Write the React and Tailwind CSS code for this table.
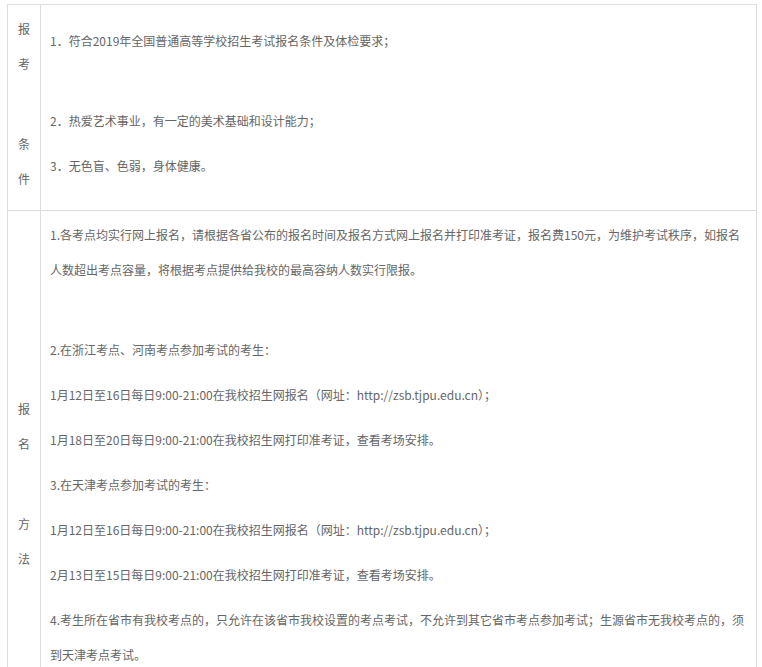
const font = { fontFamily: '"Noto Sans CJK SC", "Noto Sans", sans-serif' }

// one paragraph: lines are given as they wrap in the page
function Para({ lines }) {
  return (
    <div className="mb-[10px] leading-[35px]">
      {lines.map((l, i) => (
        <div key={i} className="whitespace-nowrap">{l}</div>
      ))}
    </div>
  )
}

function Gap() {
  return <div className="h-[35px]" />
}

function Label({ top, bottom }) {
  return (
    <div className="text-center">
      <Para lines={top} />
      <Gap />
      <Para lines={bottom} />
    </div>
  )
}

export default function App() {
  return (
    <div className="bg-white min-h-screen pt-[4px] pl-[7px] text-[12px] text-[#666]" style={font}>
      <div className="w-[750px] border border-b-0 border-[#dddddd]">
        {/* 报考条件 */}
        <div className="flex h-[206px] border-b border-[#dddddd]">
          <div className="w-[33px] shrink-0 border-r border-[#dddddd] pt-[6px]">
            <Label top={['报', '考']} bottom={['条', '件']} />
          </div>
          <div className="flex-1 pl-[9px] pt-[18px]">
            <Para lines={['1．符合2019年全国普通高等学校招生考试报名条件及体检要求；']} />
            <Gap />
            <Para lines={['2．热爱艺术事业，有一定的美术基础和设计能力；']} />
            <Para lines={['3．无色盲、色弱，身体健康。']} />
          </div>
        </div>

        {/* 报名方法 */}
        <div className="flex">
          <div className="w-[33px] shrink-0 border-r border-[#dddddd] pt-[180px]">
            <Label top={['报', '名']} bottom={['方', '法']} />
          </div>
          <div className="flex-1 pl-[9px] pt-[6px] pb-[90px]">
            <Para
              lines={[
                '1.各考点均实行网上报名，请根据各省公布的报名时间及报名方式网上报名并打印准考证，报名费150元，为维护考试秩序，如报名',
                '人数超出考点容量，将根据考点提供给我校的最高容纳人数实行限报。',
              ]}
            />
            <Gap />
            <Para lines={['2.在浙江考点、河南考点参加考试的考生：']} />
            <Para lines={['1月12日至16日每日9:00-21:00在我校招生网报名（网址：http://zsb.tjpu.edu.cn）；']} />
            <Para lines={['1月18日至20日每日9:00-21:00在我校招生网打印准考证，查看考场安排。']} />
            <Para lines={['3.在天津考点参加考试的考生：']} />
            <Para lines={['1月12日至16日每日9:00-21:00在我校招生网报名（网址：http://zsb.tjpu.edu.cn）；']} />
            <Para lines={['2月13日至15日每日9:00-21:00在我校招生网打印准考证，查看考场安排。']} />
            <Para
              lines={[
                '4.考生所在省市有我校考点的，只允许在该省市我校设置的考点考试，不允许到其它省市考点参加考试；生源省市无我校考点的，须',
                '到天津考点考试。',
              ]}
            />
          </div>
        </div>
      </div>
    </div>
  )
}
